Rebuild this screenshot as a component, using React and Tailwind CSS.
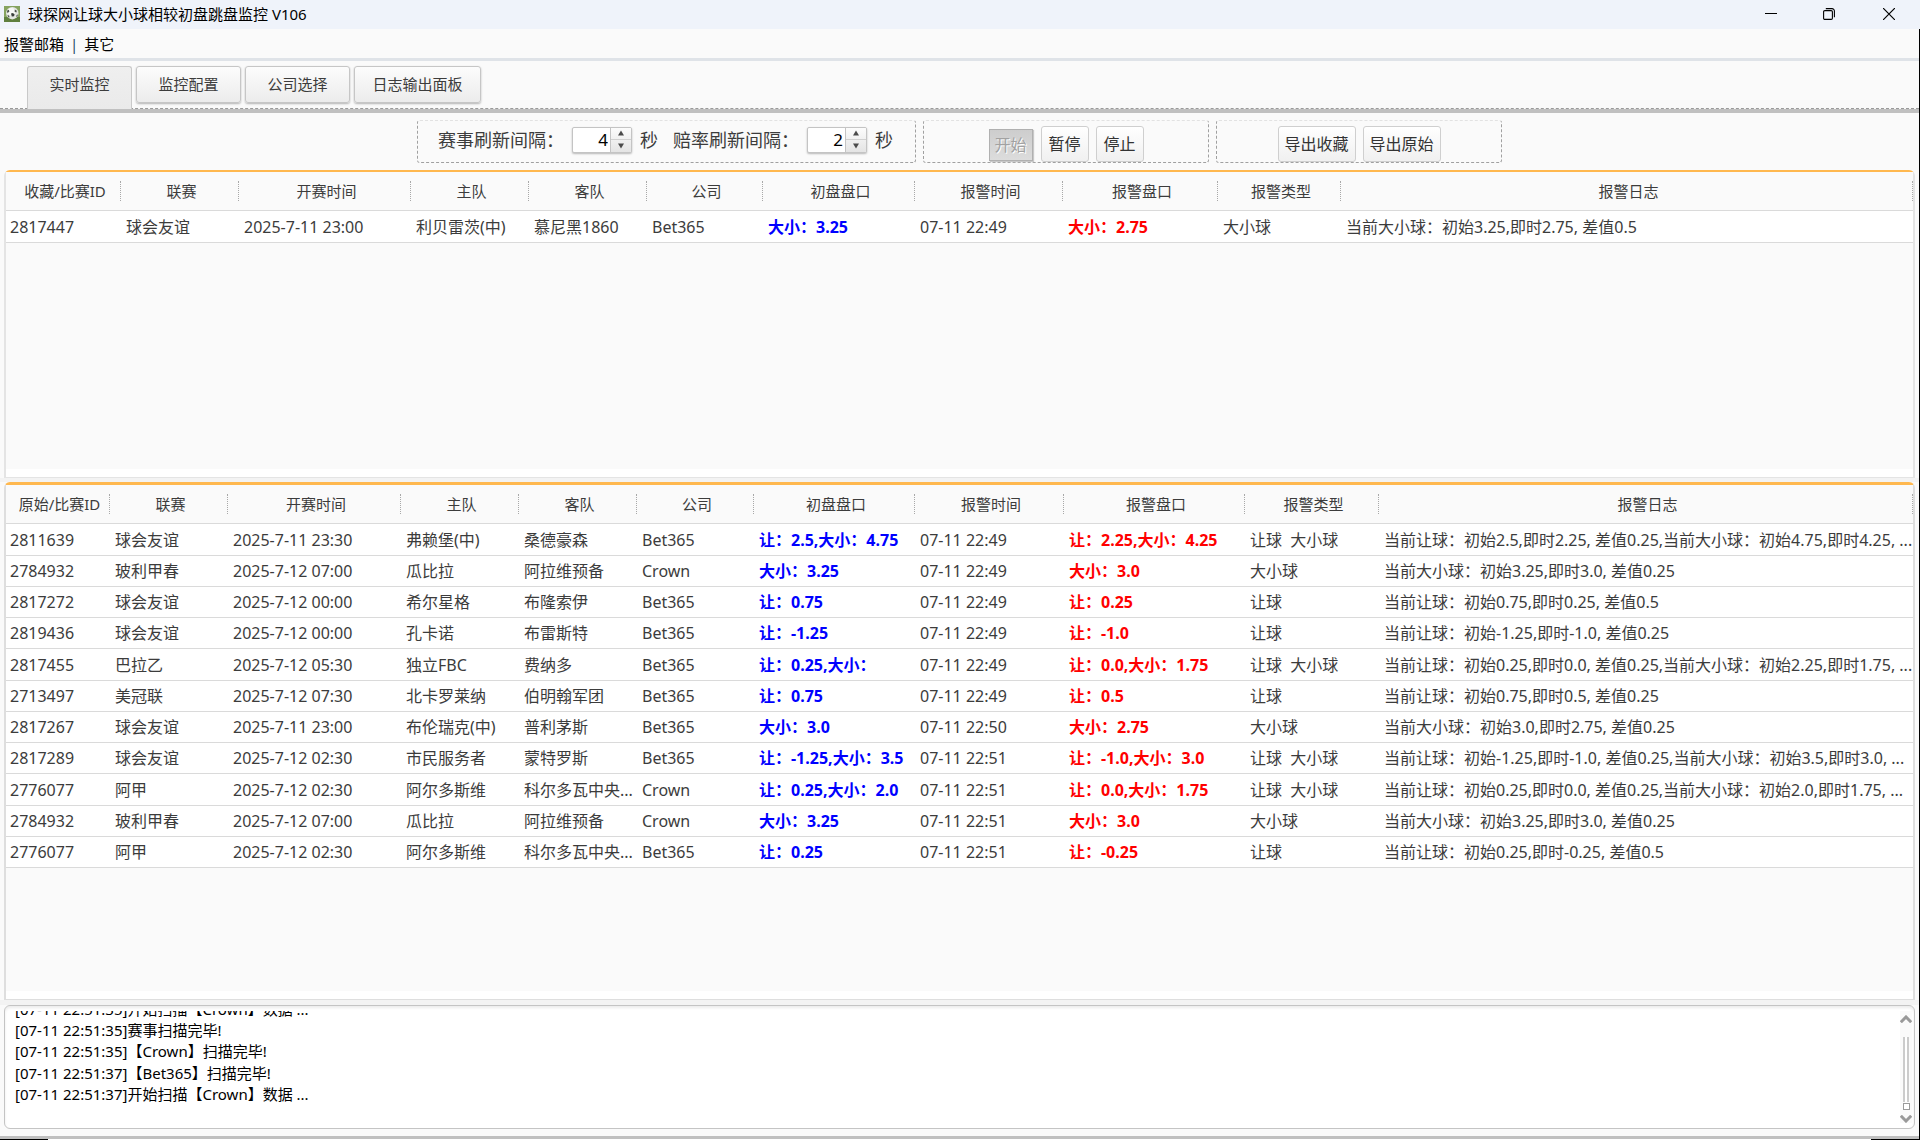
import React from "react";

const FAVORITES = {
  label: "收藏",
  heads: ["收藏/比赛ID", "联赛", "开赛时间", "主队", "客队", "公司", "初盘盘口", "报警时间", "报警盘口", "报警类型", "报警日志"],
  widths: [115, 118, 172, 118, 118, 116, 152, 148, 155, 123],
  rows: [
    ["2817447", "球会友谊", "2025-7-11 23:00", "利贝雷茨(中)", "慕尼黑1860", "Bet365", "大小：3.25", "07-11 22:49", "大小：2.75", "大小球", "当前大小球：初始3.25,即时2.75, 差值0.5"],
  ],
};

const ORIGINALS = {
  label: "原始",
  heads: ["原始/比赛ID", "联赛", "开赛时间", "主队", "客队", "公司", "初盘盘口", "报警时间", "报警盘口", "报警类型", "报警日志"],
  widths: [104, 118, 173, 118, 118, 117, 161, 149, 181, 134],
  rows: [
    ["2811639", "球会友谊", "2025-7-11 23:30", "弗赖堡(中)", "桑德豪森", "Bet365", "让：2.5,大小：4.75", "07-11 22:49", "让：2.25,大小：4.25", "让球  大小球", "当前让球：初始2.5,即时2.25, 差值0.25,当前大小球：初始4.75,即时4.25, ..."],
    ["2784932", "玻利甲春", "2025-7-12 07:00", "瓜比拉", "阿拉维预备", "Crown", "大小：3.25", "07-11 22:49", "大小：3.0", "大小球", "当前大小球：初始3.25,即时3.0, 差值0.25"],
    ["2817272", "球会友谊", "2025-7-12 00:00", "希尔星格", "布隆索伊", "Bet365", "让：0.75", "07-11 22:49", "让：0.25", "让球", "当前让球：初始0.75,即时0.25, 差值0.5"],
    ["2819436", "球会友谊", "2025-7-12 00:00", "孔卡诺", "布雷斯特", "Bet365", "让：-1.25", "07-11 22:49", "让：-1.0", "让球", "当前让球：初始-1.25,即时-1.0, 差值0.25"],
    ["2817455", "巴拉乙", "2025-7-12 05:30", "独立FBC", "费纳多", "Bet365", "让：0.25,大小：", "07-11 22:49", "让：0.0,大小：1.75", "让球  大小球", "当前让球：初始0.25,即时0.0, 差值0.25,当前大小球：初始2.25,即时1.75, ..."],
    ["2713497", "美冠联", "2025-7-12 07:30", "北卡罗莱纳", "伯明翰军团", "Bet365", "让：0.75", "07-11 22:49", "让：0.5", "让球", "当前让球：初始0.75,即时0.5, 差值0.25"],
    ["2817267", "球会友谊", "2025-7-11 23:00", "布伦瑞克(中)", "普利茅斯", "Bet365", "大小：3.0", "07-11 22:50", "大小：2.75", "大小球", "当前大小球：初始3.0,即时2.75, 差值0.25"],
    ["2817289", "球会友谊", "2025-7-12 02:30", "市民服务者", "蒙特罗斯", "Bet365", "让：-1.25,大小：3.5", "07-11 22:51", "让：-1.0,大小：3.0", "让球  大小球", "当前让球：初始-1.25,即时-1.0, 差值0.25,当前大小球：初始3.5,即时3.0, ..."],
    ["2776077", "阿甲", "2025-7-12 02:30", "阿尔多斯维", "科尔多瓦中央...", "Crown", "让：0.25,大小：2.0", "07-11 22:51", "让：0.0,大小：1.75", "让球  大小球", "当前让球：初始0.25,即时0.0, 差值0.25,当前大小球：初始2.0,即时1.75, ..."],
    ["2784932", "玻利甲春", "2025-7-12 07:00", "瓜比拉", "阿拉维预备", "Crown", "大小：3.25", "07-11 22:51", "大小：3.0", "大小球", "当前大小球：初始3.25,即时3.0, 差值0.25"],
    ["2776077", "阿甲", "2025-7-12 02:30", "阿尔多斯维", "科尔多瓦中央...", "Bet365", "让：0.25", "07-11 22:51", "让：-0.25", "让球", "当前让球：初始0.25,即时-0.25, 差值0.5"],
  ],
};

const LOG_LINES = [
  "[07-11 22:51:35]开始扫描【Crown】数据 ...",
  "[07-11 22:51:35]赛事扫描完毕!",
  "[07-11 22:51:35]【Crown】扫描完毕!",
  "[07-11 22:51:37]【Bet365】扫描完毕!",
  "[07-11 22:51:37]开始扫描【Crown】数据 ...",
];

function BallIcon() {
  return (
    <svg className="size-4" viewBox="0 0 16 16" aria-hidden="true">
      <rect width="16" height="16" fill="#86a35f" />
      <rect y="11" width="16" height="5" fill="#5f7f3e" />
      <circle cx="8.3" cy="7.2" r="6.2" fill="#e4e7e2" />
      <circle cx="7.4" cy="5.6" r="3.6" fill="#f7f8f6" />
      <path d="M7 7.6 9 7l1.6 1.4-.6 1.8-2.2.2z" fill="#3a3f3c" />
      <path d="M3.2 4.4 4.8 3.8l.6 1.6-1.4 1.4-1-.4zM10.8 3.4l2 1.4-.4 1.6-1.8-.6zM3.4 9l1.6.4.6 1.8-1.2.2zM12.6 9l1.4-.6-.6 2.2-1.2.4z" fill="#4e544f" />
    </svg>
  );
}

function TitleBar() {
  return (
    <header className="flex h-[29px] shrink-0 items-center justify-between bg-[#eff3fa] pb-px pl-1 text-black">
      <h1 className="flex items-center gap-2 text-[15px] leading-5">
        <BallIcon />
        球探网让球大小球相较初盘跳盘监控 V106
      </h1>
      <div className="flex h-full">
        <button type="button" aria-label="最小化" className="flex w-[58px] items-center justify-center">
          <svg className="size-3" viewBox="0 0 12 12"><path d="M0 5.5h12" stroke="#000" /></svg>
        </button>
        <button type="button" aria-label="还原" className="flex w-[58px] items-center justify-center">
          <svg className="size-3" viewBox="0 0 12 12" fill="none" stroke="#000" strokeWidth="1.1">
            <rect x="0.6" y="2.6" width="8.8" height="8.8" rx="1.2" />
            <path d="M2.8.6H9a2.4 2.4 0 0 1 2.4 2.4v6.2" />
          </svg>
        </button>
        <button type="button" aria-label="关闭" className="flex w-[62px] items-center justify-center">
          <svg className="size-3" viewBox="0 0 12 12"><path d="m0 0 12 12M12 0 0 12" stroke="#000" strokeWidth="1.2" /></svg>
        </button>
      </div>
    </header>
  );
}

function Tabs() {
  const tab = "relative flex h-[37px] items-center justify-center rounded-[3px] border border-[#c6c6c6] bg-gradient-to-b from-[#fcfcfc] to-[#ececec] pb-px shadow-[0_1px_2px_#b4b4b4]";
  return (
    <nav className="relative flex h-12 shrink-0 items-start gap-1 pt-[5px] pl-[27px] text-[15px] text-[#3c3c3c]" role="tablist">
      <span className="absolute inset-x-0 bottom-0 border-b border-dashed border-[#9a9a9a]" />
      <button type="button" role="tab" aria-selected="true" className="relative flex h-[43px] w-[105px] items-center justify-center rounded-t-[3px] border border-b-0 border-[#c9c9c9] bg-gradient-to-b from-[#efefef] to-[#eaeaea] pb-2">实时监控</button>
      <button type="button" role="tab" className={tab + " w-[105px]"}>监控配置</button>
      <button type="button" role="tab" className={tab + " w-[105px]"}>公司选择</button>
      <button type="button" role="tab" className={tab + " w-[127px]"}>日志输出面板</button>
    </nav>
  );
}

function Spinner({ label, value }) {
  return (
    <span className="flex h-[26px] w-[60px] overflow-hidden rounded-[2px] border border-[#c4c4c4] bg-white shadow-[0_1px_2px_#b8b8b8]">
      <input aria-label={label} defaultValue={value} className="w-[37px] pr-0.5 text-right text-[17px] leading-6 text-black outline-none" />
      <span className="flex flex-1 flex-col border-l border-[#c4c4c4] bg-gradient-to-b from-[#fcfcfc] to-[#e4e4e4]">
        <button type="button" aria-label="增加" className="flex flex-1 items-center justify-center border-b border-[#d0d0d0]">
          <svg className="h-1.5 w-2" viewBox="0 0 8 6"><path d="M4 0.5 7 5.5H1z" fill="#4a4a4a" /></svg>
        </button>
        <button type="button" aria-label="减少" className="flex flex-1 items-center justify-center">
          <svg className="h-1.5 w-2" viewBox="0 0 8 6"><path d="M4 5.5 7 0.5H1z" fill="#4a4a4a" /></svg>
        </button>
      </span>
    </span>
  );
}

function Toolbar() {
  const group = "flex h-[43px] rounded-[3px] border border-dashed border-[#a0a0a0] border-t-[#e2e2e2]";
  const button = "flex h-9 items-center justify-center rounded-[3px] border border-[#cfcfcf] bg-gradient-to-b from-white to-[#f0f0f0] text-[#333]";
  return (
    <div className="flex h-[57px] shrink-0 justify-center gap-[7px] pt-[7px]">
      <div className={group + " w-[499px] items-center pb-1 pl-5 text-lg text-[#3c3c3c]"}>
        <span className="w-[134px]">赛事刷新间隔：</span>
        <Spinner label="赛事刷新间隔" value="4" />
        <span className="ml-2 w-[33px]">秒</span>
        <span className="w-[134px]">赔率刷新间隔：</span>
        <Spinner label="赔率刷新间隔" value="2" />
        <span className="ml-2">秒</span>
      </div>
      <div className={group + " w-[286px] items-end justify-center gap-[7px] text-base"}>
        <button type="button" disabled className="mr-px mb-px flex h-8 w-11 items-center justify-center border border-[#b0b0b0] bg-gradient-to-b from-[#cdcdcd] to-[#dcdcdc] text-[#a2a2a2] shadow-[1px_1px_1px_#c8c8c8] [text-shadow:1px_1px_0_#fff]">开始</button>
        <button type="button" className={button + " w-12"}>暂停</button>
        <button type="button" className={button + " w-12"}>停止</button>
      </div>
      <div className={group + " w-[286px] items-end justify-center gap-[7px] text-base"}>
        <button type="button" className={button + " w-[78px]"}>导出收藏</button>
        <button type="button" className={button + " w-[78px]"}>导出原始</button>
      </div>
    </div>
  );
}

function cellTone(column) {
  if (column === 6) return "font-bold text-[#0000ff]";
  if (column === 8) return "font-bold text-[#ff0000]";
  return "";
}

function MatchTable({ data }) {
  return (
    <table className="w-full table-fixed border-separate border-spacing-0 text-base text-[#3c3c3c]" aria-label={data.label}>
      <colgroup>
        {data.widths.map((width, i) => (
          <col key={i} style={{ width }} />
        ))}
        <col />
      </colgroup>
      <thead>
        <tr className="h-[39px]">
          {data.heads.map((head) => (
            <th key={head} scope="col" className="border-b border-[#dadada] p-0 text-[15px] leading-5 font-normal whitespace-nowrap">
              <span className="block border-r border-dotted border-[#a8a8a8] pl-1">{head}</span>
            </th>
          ))}
        </tr>
      </thead>
      <tbody>
        {data.rows.map((row, r) => (
          <tr key={r} className="h-[31px] bg-white nth-[4n+1]:h-8">
            {row.map((cell, c) => (
              <td key={c} className={"overflow-hidden border-b border-[#dadada] p-0 pl-[5px] leading-6 whitespace-pre first:pl-1 " + cellTone(c)}>{cell}</td>
            ))}
          </tr>
        ))}
      </tbody>
    </table>
  );
}

function LogPanel() {
  return (
    <section className="mx-1 mb-[7px] flex h-[124px] shrink-0 rounded-md border border-[#c4c4c4] bg-white py-[5px] pr-0.5 pl-[5px] shadow-[inset_0_2px_3px_#ececec]">
      <div className="flex flex-1 flex-col justify-end overflow-hidden pb-[18px] pl-[5px] text-[15px] text-black" role="log">
        {LOG_LINES.map((line, i) => (
          <p key={i} className="h-[21px] shrink-0 leading-[21px] whitespace-pre nth-[3]:h-[22px]">{line}</p>
        ))}
      </div>
      <div className="flex w-3 flex-col items-center justify-between bg-[#fafafa] pt-1">
        <svg className="h-2 w-3" viewBox="0 0 12 8"><path d="M.8 7.2 6 2l5.200 5.200" fill="none" stroke="#999" strokeWidth="3" /></svg>
        <div className="flex flex-col items-center gap-px pt-2">
          <span className="h-[65px] w-1.5 border-x-2 border-[#cbcbcb] bg-white" />
          <span className="size-[7px] border border-[#999] bg-white" />
        </div>
        <svg className="h-2 w-3" viewBox="0 0 12 8"><path d="m.8.8 5.200 5.200 5.200-5.200" fill="none" stroke="#999" strokeWidth="3" /></svg>
      </div>
    </section>
  );
}

export default function App() {
  return (
    <div lang="zh-CN" className="flex min-h-screen flex-col bg-[#fafafa] font-['Noto_Sans','Noto_Sans_CJK_SC',sans-serif]">
      <TitleBar />
      <div className="flex flex-1 flex-col border-r border-black">
        <nav className="flex h-8 shrink-0 items-center gap-1.5 border-b-3 border-[#dfe3e8] pt-px pl-1 text-[15px] text-black">
          <button type="button">报警邮箱</button>
          <span className="text-[#2a4a6a]">|</span>
          <button type="button">其它</button>
        </nav>
        <Tabs />
        <main className="flex flex-1 flex-col border-y-4 border-y-[#c0c0c0] border-b-[3px]">
          <Toolbar />
          <section className="mx-1 flex h-[308px] flex-col rounded-t-md border-x-2 border-t-2 border-b border-[#e4e4e4] border-t-[#ffb84f] bg-white pb-2">
            <div className="flex-1 bg-[#fafafa]">
              <MatchTable data={FAVORITES} />
            </div>
          </section>
          <div className="h-1 shrink-0 bg-[#f3f3f3]" />
          <section className="mx-1 flex flex-1 flex-col rounded-t-md border-x-2 border-t-3 border-b border-[#dedede] border-t-[#ffb84f] bg-white pb-2">
            <div className="flex-1 bg-[#fafafa]">
              <MatchTable data={ORIGINALS} />
            </div>
          </section>
          <div className="h-[5px] shrink-0 bg-[#f3f3f3]" />
          <LogPanel />
        </main>
        <div className="flex h-px justify-between bg-white">
          <span className="w-12 bg-black" />
          <span className="w-12 bg-black" />
        </div>
      </div>
    </div>
  );
}
